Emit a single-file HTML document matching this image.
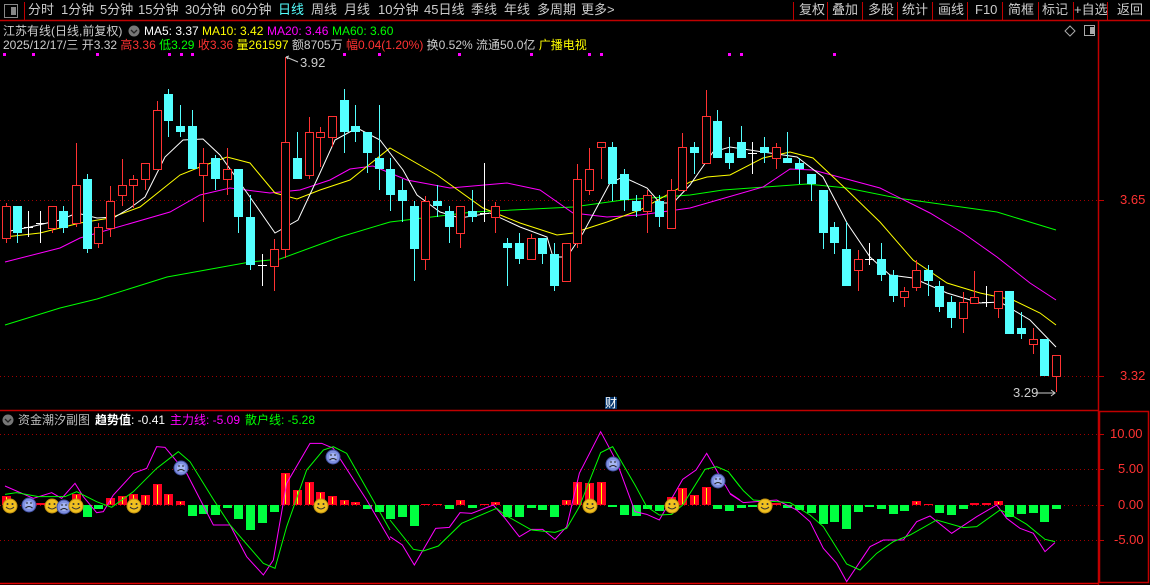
<!DOCTYPE html>
<html><head><meta charset="utf-8">
<style>
html,body{margin:0;padding:0;background:#000;width:1150px;height:585px;overflow:hidden;font-family:"Liberation Sans","Noto Sans CJK SC",sans-serif;}
.t{position:absolute;white-space:nowrap;font-size:12px;line-height:14px;}
.tb span{position:absolute;top:0;}
#svg{position:absolute;left:0;top:0;}
</style></head><body>
<svg id="svg" width="1150" height="585" xmlns="http://www.w3.org/2000/svg"></svg>

<div class="t tb" style="top:3px;left:0;font-size:13px;color:#ccc;">
<span style="left:28px">分时</span>
<span style="left:61px">1分钟</span>
<span style="left:100px">5分钟</span>
<span style="left:138px">15分钟</span>
<span style="left:185px">30分钟</span>
<span style="left:231px">60分钟</span>
<span style="left:278px;color:#54ffff">日线</span>
<span style="left:311px">周线</span>
<span style="left:344px">月线</span>
<span style="left:378px">10分钟</span>
<span style="left:424px">45日线</span>
<span style="left:471px">季线</span>
<span style="left:504px">年线</span>
<span style="left:537px">多周期</span>
<span style="left:581px">更多&gt;</span>
<span style="left:799px">复权</span>
<span style="left:832px">叠加</span>
<span style="left:868px">多股</span>
<span style="left:902px">统计</span>
<span style="left:938px">画线</span>
<span style="left:975px">F10</span>
<span style="left:1008px">简框</span>
<span style="left:1042px">标记</span>
<span style="left:1074px">+自选</span>
<span style="left:1117px">返回</span>
</div>

<div class="t" style="top:24px;left:3px;color:#ccc">江苏有线(日线,前复权)</div>
<div class="t" style="top:24px;left:144px;color:#fff">MA5: 3.37</div>
<div class="t" style="top:24px;left:202px;color:#ffff00">MA10: 3.42</div>
<div class="t" style="top:24px;left:267px;color:#ff00ff">MA20: 3.46</div>
<div class="t" style="top:24px;left:332px;color:#00ff00">MA60: 3.60</div>

<div class="t" style="top:38px;left:3px;color:#ccc">2025/12/17/三 开3.32 <span style="color:#ff3232">高3.36</span> <span style="color:#00ff00">低3.29</span> <span style="color:#ff3232">收3.36</span> <span style="color:#ffff00">量261597</span> 额8705万 <span style="color:#ff3232">幅0.04(1.20%)</span> 换0.52% 流通50.0亿 <span style="color:#ffff00">广播电视</span></div>

<div class="t" style="top:56px;left:300px;color:#ccc;font-size:13px">3.92</div>
<div class="t" style="top:386px;left:1013px;color:#ccc;font-size:13px">3.29</div>
<div class="t" style="top:193px;left:1120px;color:#ff3232;font-size:13px">3.65</div>
<div class="t" style="top:369px;left:1120px;color:#ff3232;font-size:13px">3.32</div>
<div class="t" style="top:427px;left:1110px;color:#ff3232;font-size:13px">10.00</div>
<div class="t" style="top:462px;left:1118px;color:#ff3232;font-size:13px">5.00</div>
<div class="t" style="top:498px;left:1118px;color:#ff3232;font-size:13px">0.00</div>
<div class="t" style="top:533px;left:1114px;color:#ff3232;font-size:13px">-5.00</div>

<div class="t" style="top:397px;left:605px;width:12px;height:12px;background:#0a3a70;color:#fff;font-size:12px;line-height:12px">财</div>

<div class="t" style="top:413px;left:18px;color:#bbb">资金潮汐副图</div>
<div class="t" style="top:413px;left:95px;color:#fff"><b>趋势值</b>: -0.41</div>
<div class="t" style="top:413px;left:170px;color:#ff00ff">主力线: -5.09</div>
<div class="t" style="top:413px;left:245px;color:#00ff00">散户线: -5.28</div>

<script>
var S=document.getElementById('svg');var h='';
function L(x1,y1,x2,y2,c,w,d){h+='<line x1="'+x1+'" y1="'+y1+'" x2="'+x2+'" y2="'+y2+'" stroke="'+c+'" stroke-width="'+(w||1)+'"'+(d?' stroke-dasharray="'+d+'"':'')+'/>';}
function R(x,y,w,hh,f,s){h+='<rect x="'+x+'" y="'+y+'" width="'+w+'" height="'+hh+'" fill="'+f+'"'+(s?' stroke="'+s+'"':'')+'/>';}
L(0,20.5,1150,20.5,'#c00000',1.5);
L(24.5,2,24.5,20,'#c00000');
[793,827,862,897,932,967,1002,1038,1073,1107].forEach(function(x){L(x+.5,2,x+.5,20,'#c00000');});
R(4.5,4.5,13,13,'none','#888');R(11,7,5,8,'#888');
L(1098.5,20,1098.5,585,'#c00000',1.5);
L(0,410.5,1098,410.5,'#c00000',1.5);
h+='<rect x="1099.5" y="411.5" width="49" height="171" fill="none" stroke="#c00000" stroke-width="1.5"/>';
L(0,583.5,1098,583.5,'#e00000',1.5);
[200,376].forEach(function(y){L(0,y+.5,1098,y+.5,'#a00000',1,'1 3');L(1099,y+.5,1104,y+.5,'#c00000');});
[434,469,505,540].forEach(function(y){L(0,y+.5,1098,y+.5,'#a00000',1,'1 3');L(1099,y+.5,1104,y+.5,'#c00000');});
h+='<path d="M1070 26 L1075 31 L1070 36 L1065 31 Z" fill="none" stroke="#aaa"/>';
R(1084.5,25.5,10,10,'none','#aaa');R(1090,27,4,7,'#aaa');
h+='<circle cx="134" cy="31" r="5.5" fill="#777"/><path d="M131 30 L134 33 L137 30" stroke="#222" fill="none" stroke-width="1.3"/>';
h+='<circle cx="8" cy="420" r="5.5" fill="#777"/><path d="M5 419 L8 422 L11 419" stroke="#222" fill="none" stroke-width="1.3"/>';
[3,32,96,168,180,191,343,378,458,530,588,600,728,740,833].forEach(function(x){R(x,53,3,3,'#ff00ff');});
var C=[[6,'r',206,238,203,243],[17,'c',206,233,206,243],[28,'w',227,227,211,237],[40,'w',223,223,211,243],[52,'r',206,228,206,233],[63,'c',211,228,206,233],[76,'r',185,223,143,227],[87,'c',179,249,174,253],[98,'r',227,243,223,248],[110,'r',201,228,186,237],[122,'r',185,195,159,206],[133,'r',179,185,175,208],[145,'r',163,179,163,190],[157,'r',110,169,101,169],[168,'c',94,121,89,137],[180,'c',126,132,105,137],[192,'c',126,169,110,169],[203,'r',163,175,148,222],[215,'c',158,179,155,190],[227,'r',169,179,148,195],[238,'c',169,217,169,233],[250,'c',217,265,195,270],[262,'w',265,265,254,286],[274,'r',249,266,239,291],[285,'r',142,249,57,258],[297,'c',158,179,132,179],[309,'r',132,175,117,179],[320,'r',132,137,127,167],[332,'r',116,137,116,147],[344,'c',100,132,89,153],[355,'c',126,132,105,142],[367,'c',132,153,132,173],[379,'c',158,169,105,190],[390,'c',169,195,158,211],[402,'c',190,201,179,222],[414,'c',206,249,201,281],[425,'r',201,259,196,270],[437,'c',201,206,185,217],[449,'c',211,227,206,243],[460,'r',206,233,206,248],[472,'c',211,217,190,222],[484,'w',213,213,163,222],[495,'r',206,217,202,233],[507,'c',243,248,238,286],[519,'c',243,259,233,264],[531,'r',238,259,234,259],[542,'c',238,254,238,264],[554,'c',254,286,243,291],[566,'r',243,281,243,281],[577,'r',179,243,164,248],[589,'r',169,190,148,195],[601,'r',142,147,142,179],[612,'c',147,184,142,201],[624,'c',174,200,169,211],[636,'c',201,211,195,217],[647,'r',195,211,190,233],[659,'c',201,217,195,227],[671,'r',190,228,179,228],[682,'r',147,190,133,190],[694,'c',147,153,142,174],[706,'r',116,163,90,163],[717,'c',121,158,110,158],[729,'c',153,163,137,169],[741,'c',142,158,126,158],[752,'w',153,153,142,174],[764,'c',147,153,137,163],[776,'r',147,158,143,169],[787,'c',158,163,132,163],[799,'c',163,169,158,184],[811,'c',174,184,174,201],[823,'c',190,233,190,249],[834,'c',227,243,222,254],[846,'c',249,286,222,286],[858,'r',259,270,250,291],[869,'w',259,259,243,265],[881,'c',259,275,243,281],[893,'c',275,296,270,302],[904,'r',291,297,287,307],[916,'r',270,287,260,291],[928,'c',270,281,265,296],[939,'c',286,307,281,312],[951,'c',302,318,296,328],[963,'r',302,318,292,333],[974,'r',297,303,271,303],[986,'w',302,302,286,307],[998,'r',291,308,291,318],[1009,'c',291,334,291,334],[1021,'c',328,334,312,339],[1033,'r',339,344,328,354],[1044,'c',339,376,339,376],[1056,'r',355,376,355,392]];
function P(pts,c){h+='<polyline points="'+pts.map(function(p){return p[0]+','+p[1];}).join(' ')+'" fill="none" stroke="'+c+'" stroke-width="1"/>';}
P([[5,325],[60,308],[97,299],[167,277],[250,262],[280,259],[340,237],[390,222],[473,212],[573,207],[623,200],[690,195],[723,190],[807,184],[847,188],[897,198],[947,205],[997,212],[1056,230]],'#00ff00');
P([[5,262],[60,248],[80,238],[170,212],[200,195],[230,188],[270,193],[300,190],[330,180],[350,169],[373,166],[407,180],[450,188],[507,183],[540,190],[573,213],[607,217],[640,215],[690,208],[763,187],[790,169],[813,170],[880,188],[930,213],[963,233],[997,257],[1030,283],[1056,300]],'#ff00ff');
P([[5,237],[40,233],[80,223],[110,218],[140,207],[180,175],[200,167],[227,157],[250,163],[275,193],[297,199],[320,190],[350,180],[390,148],[437,175],[483,208],[520,223],[557,235],[573,233],[607,222],[640,210],[690,182],[707,177],[730,175],[763,158],[790,152],[813,158],[847,190],[880,222],[913,260],[947,283],[980,293],[1013,300],[1040,313],[1056,325]],'#ffff00');
P([[5,232],[30,227],[60,220],[77,213],[97,218],[115,217],[130,208],[145,197],[165,157],[183,140],[203,139],[220,155],[250,197],[275,233],[298,220],[320,173],[335,140],[357,128],[380,140],[403,170],[417,195],[440,212],[460,218],[490,213],[520,227],[547,237],[553,257],[567,257],[583,233],[610,183],[623,177],[647,188],[660,203],[673,203],[690,185],[713,152],[730,147],[763,152],[797,157],[823,177],[847,223],[870,257],[890,275],[913,278],[947,293],[980,303],[1000,302],[1030,320],[1056,347]],'#ffffff');
C.forEach(function(c){var x=c[0],t=c[1];
 if(t=='w'){L(x+.5,c[4],x+.5,c[5],'#fff');L(x-4,c[2]+.5,x+5,c[2]+.5,'#fff');return;}
 if(t=='r'){L(x+.5,c[4],x+.5,c[2],'#ff3232');L(x+.5,c[3],x+.5,c[5],'#ff3232');h+='<rect x="'+(x-3.5)+'" y="'+(c[2]+.5)+'" width="8" height="'+Math.max(1,c[3]-c[2])+'" fill="#000" stroke="#ff3232"/>';}
 else{L(x+.5,c[4],x+.5,c[5],'#54ffff');R(x-4,c[2],9,Math.max(2,c[3]-c[2]),'#54ffff');}
});
L(285.5,57,285.5,62,'#ff3232');
h+='<path d="M286 57 L298 62" stroke="#ccc" fill="none"/><path d="M286 57 L289 56 M286 57 L288 59" stroke="#ccc"/>';
h+='<path d="M1035 393 L1055 393 M1051 390 L1055 393 L1051 396" stroke="#ccc" fill="none"/>';
var B=[[6,496],[40,503],[76,494],[87,517],[98,509],[110,498],[122,496],[133,494],[145,495],[157,484],[168,494],[180,501],[192,516],[203,514],[215,515],[227,508],[238,519],[250,530],[262,523],[274,512],[285,473],[297,490],[309,482],[320,492],[332,496],[344,500],[355,502],[367,509],[379,512],[390,519],[402,517],[414,526],[425,504],[437,504],[449,509],[460,500],[472,508],[484,504],[495,502],[507,517],[519,517],[531,508],[542,510],[554,517],[566,500],[577,482],[589,483],[601,482],[612,507],[624,515],[636,516],[647,509],[659,511],[671,497],[682,488],[694,495],[706,487],[717,509],[729,511],[741,508],[752,507],[776,503],[787,508],[799,510],[811,513],[823,524],[834,522],[846,529],[858,512],[869,507],[881,509],[893,514],[904,511],[916,501],[928,504],[939,513],[951,515],[963,509],[974,503],[986,503],[998,501],[1009,517],[1021,514],[1033,513],[1044,522],[1056,509]];
B.forEach(function(b){var x=b[0],y=b[1];
 if(y<505){R(x-4,y,9,505-y,'#ff0020');R(x,y+1,1,Math.max(0,503-y),'#ffff00');}
 else R(x-4,505,9,Math.max(2,y-505),'#00ff40');});
function Q(a,ox,oy,c){P(a.map(function(p){return [ox+p[0]/3,oy+p[1]/3];}),c);}
Q([[15,258],[100,295],[155,278],[185,295],[225,250],[250,290],[290,338],[310,335],[340,285],[400,220],[440,205],[470,140],[495,142],[560,220],[640,375],[690,375],[740,470],[790,525],[820,480],[860,250],[930,130],[965,130],[1000,145],[1100,300],[1170,420]],0,400,'#ff00ff');
Q([[0,350],[37,375],[73,435],[137,325],[178,322],[210,278],[245,280],[310,255],[345,295],[388,350],[425,328],[458,328],[495,358],[530,320],[568,160],[632,35],[680,125],[735,275],[770,283],[808,300],[878,178],[918,150],[950,100],[1020,220],[1050,240]],390,420,'#ff00ff');
Q([[0,222],[40,248],[140,240],[200,270],[240,305],[280,385],[320,430],[350,485],[420,380],[460,360],[520,360],[560,305],[600,288],[665,340],[740,290],[800,255],[830,295],[870,325],[910,340],[945,395],[975,368]],730,420,'#ff00ff');
Q([[15,283],[50,278],[115,290],[195,290],[230,275],[290,305],[335,322],[400,275],[470,205],[535,155],[570,185],[640,298],[690,375],[790,490],[825,505],[860,380],[920,210],[970,150],[1000,140],[1040,160],[1170,390]],0,400,'#00ff00');
Q([[0,300],[70,388],[100,393],[145,378],[215,310],[320,265],[345,285],[425,330],[495,337],[530,325],[568,260],[632,98],[668,80],[735,195],[770,260],[808,285],[845,283],[878,255],[945,148],[980,140],[1015,155],[1050,200]],390,420,'#00ff00');
Q([[0,162],[40,212],[70,240],[180,248],[240,285],[280,320],[350,432],[390,450],[440,400],[490,365],[540,345],[620,300],[700,323],[740,320],[810,270],[840,283],[890,313],[945,358],[975,365]],730,420,'#00ff00');
function face(x,y,s){
 if(s){h+='<circle cx="'+x+'" cy="'+y+'" r="7" fill="#f0c020" stroke="#c09010"/><circle cx="'+(x-2.5)+'" cy="'+(y-2)+'" r="1" fill="#333"/><circle cx="'+(x+2.5)+'" cy="'+(y-2)+'" r="1" fill="#333"/><path d="M'+(x-4)+' '+(y+1)+' Q'+x+' '+(y+5)+' '+(x+4)+' '+(y+1)+'" stroke="#333" fill="none"/>';}
 else{h+='<circle cx="'+x+'" cy="'+y+'" r="7" fill="#8090e0" stroke="#4050a0"/><circle cx="'+x+'" cy="'+y+'" r="4" fill="#c0d0ff" opacity=".6"/><path d="M'+(x-3)+' '+(y-2)+' h2 M'+(x+1)+' '+(y-2)+' h2" stroke="#222"/><path d="M'+(x-3.5)+' '+(y+3)+' Q'+x+' '+(y)+' '+(x+3.5)+' '+(y+3)+'" stroke="#222" fill="none"/>';}
}
[[10,506,1],[29,505,0],[52,506,1],[64,507,0],[76,506,1],[134,506,1],[181,468,0],[321,506,1],[333,457,0],[590,506,1],[613,464,0],[672,506,1],[718,481,0],[765,506,1]].forEach(function(f){face(f[0],f[1],f[2]);});
S.innerHTML=h;
</script>
</body></html>
